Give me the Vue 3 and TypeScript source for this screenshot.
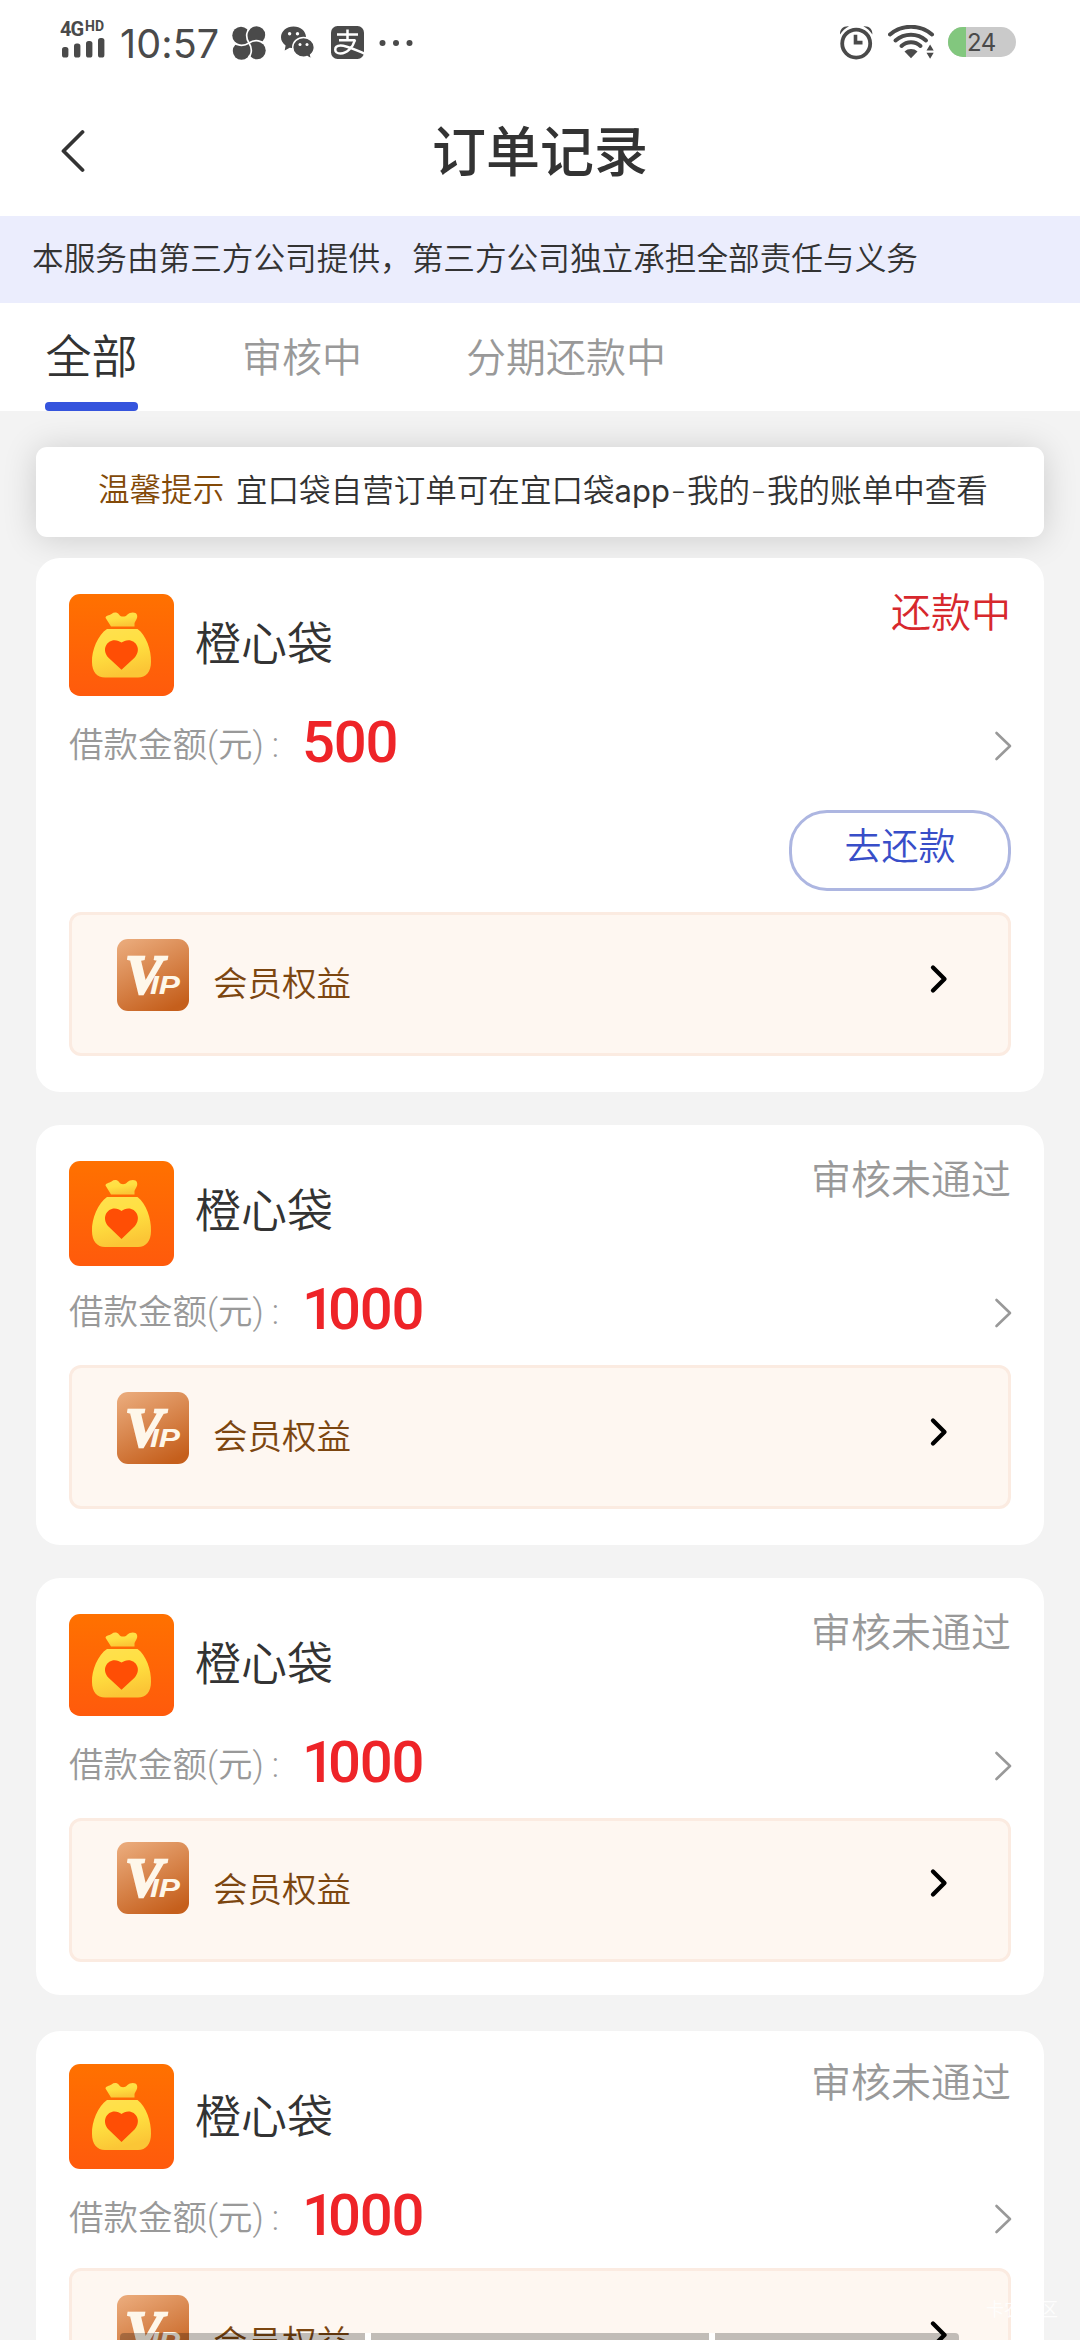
<script setup lang="ts">
interface Order {
  id: number
  name: string
  amount: number
  status: string
  repaying: boolean
}

const tabs: string[] = ['全部', '审核中', '分期还款中']
const activeTab = 0

const orders: Order[] = [
  { id: 1, name: '橙心袋', amount: 500, status: '还款中', repaying: true },
  { id: 2, name: '橙心袋', amount: 1000, status: '审核未通过', repaying: false },
  { id: 3, name: '橙心袋', amount: 1000, status: '审核未通过', repaying: false },
  { id: 4, name: '橙心袋', amount: 1000, status: '审核未通过', repaying: false },
]

// A leading "1" is narrower than the other digits and needs tighter kerning
const startsWithOne = (n: number): boolean => String(n).startsWith('1')
</script>

<template>
  <div class="screen">
    <div class="status-bar">
      <div class="signal">
        <div class="net"><span class="net-g">4G</span><span class="net-hd">HD</span></div>
        <svg class="bars" width="44" height="20" viewBox="0 0 44 20">
          <g fill="#4a4a4a">
            <rect x="0" y="9" width="6.4" height="10.5" rx="2.6" />
            <rect x="12" y="5.5" width="6.4" height="14" rx="2.6" />
            <rect x="24" y="3" width="6.4" height="16.5" rx="2.6" />
            <rect x="36" y="0" width="6.4" height="19.5" rx="2.6" />
          </g>
        </svg>
      </div>
      <span class="time">10:57</span>
      <svg class="app-ic fan" width="34" height="34" viewBox="0 0 34 34">
        <g fill="#4a4a4a">
          <circle cx="9" cy="9.5" r="8.7" />
          <circle cx="24.5" cy="9" r="8.7" />
          <circle cx="25" cy="24.5" r="8.7" />
          <circle cx="9.5" cy="25" r="8.7" />
          <rect x="9" y="9" width="16" height="16" />
        </g>
        <g fill="none" stroke="#fff" stroke-width="1.7">
          <path d="M17 17C13 11 14.500 4 19 0" />
          <path d="M17 17C23 13 30 14.500 34 19" />
          <path d="M17 17C21 23 19.500 30 15 34" />
          <path d="M17 17C11 21 4 19.500 0 15" />
        </g>
      </svg>
      <svg class="app-ic wechat" width="35" height="34" viewBox="0 0 35 34">
        <path d="M12.500 0.500C5.600.500 0 5.200 0 11.200c0 3.300 1.800 6.200 4.600 8.200L3.700 24.500l5-2.700c1.200.3 2.500.5 3.800.5 6.900 0 12.500-4.900 12.500-11.100S19.400.500 12.500.500z" fill="#4a4a4a" />
        <path d="M22.500 11.500c-6 0-10.800 4.400-10.800 9.800s4.800 9.800 10.800 9.800c1.300 0 2.500-.2 3.700-.6l4.300 2.500-.9-4.200c2.300-1.800 3.700-4.500 3.700-7.500 0-5.400-4.800-9.800-10.800-9.800z" fill="#4a4a4a" stroke="#fff" stroke-width="1.400" />
        <g fill="#fff">
          <circle cx="8.600" cy="7.800" r="1.700" /><circle cx="16.500" cy="7.800" r="1.700" />
          <circle cx="19" cy="18.500" r="1.500" /><circle cx="26" cy="18.500" r="1.500" />
        </g>
      </svg>
      <svg class="app-ic alipay" width="33" height="33" viewBox="0 0 33 33">
        <rect width="33" height="33" rx="6.500" fill="#4a4a4a" />
        <g fill="none" stroke="#fff" stroke-width="2.500">
          <path d="M6 8.500H27M16.500 3.500V14M8 14.300H24.500" />
          <path d="M24 14C22 21 16 27.500 9.500 27.500C2.500 27.500 2.500 19.800 9.500 19.600C15.500 19.500 23 23.500 33.500 27.500" />
        </g>
      </svg>
      <svg class="app-ic dots" width="34" height="8" viewBox="0 0 34 8">
        <g fill="#4a4a4a"><circle cx="3.500" cy="4" r="3" /><circle cx="17" cy="4" r="3" /><circle cx="30.500" cy="4" r="3" /></g>
      </svg>
      <div class="spacer"></div>
      <svg class="alarm" width="35" height="35" viewBox="0 0 35 35">
        <g fill="none" stroke="#4a4a4a">
          <circle cx="17.200" cy="18.600" r="14" stroke-width="3.800" />
          <path d="M16.500 9.800V17.600H23.500" stroke-width="3.600" />
        </g>
        <path d="M1 9.500C0.800 4 4 .8 10 1.200C6 3.300 3.500 6 1 9.500zM33.400 9.500C33.600 4 30.400.8 24.400 1.200C28.400 3.300 30.900 6 33.400 9.500z" fill="#4a4a4a" />
      </svg>
      <svg class="wifi" width="47" height="34" viewBox="0 0 47 34">
        <g fill="none" stroke="#4a4a4a" stroke-width="4" stroke-linecap="round">
          <path d="M2 9.500C14 -.8 32 -.8 44 9.500" />
          <path d="M7.500 15.500C16.500 7.800 29.500 7.800 38 15.500" />
          <path d="M13.500 21C19 16 27 16 32.500 21" />
        </g>
        <path d="M16.500 26.500C20 23.200 26 23.200 29.500 26.500L23 33.200z" fill="#4a4a4a" />
        <path d="M38.500 25.500l3.600-6 3.600 6zM38.500 27.700h7.200l-3.600 6z" fill="#4a4a4a" />
      </svg>
      <div class="battery"><div class="level"></div><span>24</span></div>
    </div>

    <header class="nav">
      <svg class="back" width="26" height="44" viewBox="0 0 26 44">
        <path d="M23.500 3L4.500 22L23.500 41" fill="none" stroke="#333" stroke-width="3.800" stroke-linecap="round" stroke-linejoin="round" />
      </svg>
      <h1>订单记录</h1>
    </header>

    <div class="notice">本服务由第三方公司提供，第三方公司独立承担全部责任与义务</div>

    <nav class="tabs">
      <div v-for="(t, i) in tabs" :key="t" class="tab" :class="{ active: i === activeTab }">{{ t }}</div>
    </nav>

    <div class="tip"><span class="tip-label">温馨提示</span><span class="tip-text">宜口袋自营订单可在宜口袋<span class="latin">app</span><span class="dash">-</span>我的<span class="dash">-</span>我的账单中查看</span></div>

    <main class="list">
      <section v-for="o in orders" :key="o.id" class="card">
        <div class="head">
          <svg class="logo" viewBox="0 0 105 105" preserveAspectRatio="none">
            <defs>
              <linearGradient :id="'bg' + o.id" x1="0" y1="0" x2="0" y2="1">
                <stop offset="0" stop-color="#ff7100" /><stop offset="1" stop-color="#ff5a0c" />
              </linearGradient>
              <linearGradient :id="'bag' + o.id" x1="0" y1="0" x2="0.300" y2="1">
                <stop offset="0" stop-color="#ffe050" /><stop offset="0.500" stop-color="#ffe040" /><stop offset="1" stop-color="#fbc636" />
              </linearGradient>
            </defs>
            <rect width="105" height="105" rx="11" :fill="`url(#bg${o.id})`" />
            <path d="M42 33.500L36.500 24.500C37 21.500 40 22.500 42.500 20.500C45 18.500 48 18.500 50 21C52 24 56 24 58.500 21C61 18.500 67 18 68 21.500C69 25 66.500 27 65.500 30V33.500z" :fill="`url(#bag${o.id})`" />
            <path d="M38 36H68.500C77 42 82.500 58 82 70C82 80 77 86 69 86H36C28 86 23 80 23 70C22.500 58 29 42 38 36z" :fill="`url(#bag${o.id})`" />
            <path d="M52.500 78L39.500 65.500C32 57 38 47.500 45.500 47.500C48.500 47.500 50.500 48.500 52.500 50C54.500 48.500 56.500 47.500 59.500 47.500C67 47.500 73 57 65.500 65.500z" fill="#ff4e05" />
          </svg>
          <span class="name">{{ o.name }}</span>
          <span class="state" :class="{ red: o.repaying }">{{ o.status }}</span>
        </div>
        <div class="amount">
          <span class="label">借款金额(元)<i>:</i></span>
          <span class="value" :class="{ 'lead-one': startsWithOne(o.amount) }">{{ o.amount }}</span>
          <svg class="more" width="18" height="30" viewBox="0 0 18 30">
            <path d="M2.500 2L16 15L2.500 28" fill="none" stroke="#999" stroke-width="2.600" stroke-linecap="round" stroke-linejoin="round" />
          </svg>
        </div>
        <div v-if="o.repaying" class="action"><button>去还款</button></div>
        <div class="vip">
          <svg class="vip-ic" width="72" height="72" viewBox="0 0 72 72">
            <defs>
              <linearGradient :id="'vip' + o.id" x1="0.200" y1="0" x2="0.700" y2="1">
                <stop offset="0" stop-color="#e9a878" /><stop offset="1" stop-color="#c55f1c" />
              </linearGradient>
            </defs>
            <rect width="72" height="72" rx="11" :fill="`url(#vip${o.id})`" />
            <text class="v" x="8" y="54" textLength="38" lengthAdjust="spacingAndGlyphs">V</text>
            <text class="ip" x="33" y="55" textLength="30" lengthAdjust="spacingAndGlyphs">IP</text>
          </svg>
          <span class="vip-text">会员权益</span>
          <svg class="vip-more" width="20" height="30" viewBox="0 0 20 30">
            <path d="M4 3.500L15.500 15L4 26.500" fill="none" stroke="#000" stroke-width="4.300" stroke-linecap="round" stroke-linejoin="round" />
          </svg>
        </div>
      </section>
    </main>

    <div class="watermark">卡农社区</div>
    <div class="gesture"><i></i><i></i><i></i></div>
  </div>
</template>

<style>
html,
body {
  margin: 0;
  overflow: hidden;
}
</style>

<style scoped>
.screen {
  position: relative;
  width: 1080px;
  height: 2340px;
  overflow: hidden;
  background: #f3f3f3;
  font-family: Roboto, "Noto Sans CJK SC", sans-serif;
  font-weight: 350;
  color: #333;
  display: flex;
  flex-direction: column;
}
.status-bar {
  height: 90px;
  flex: none;
  box-sizing: border-box;
  padding: 0 64px 0 60px;
  background: #fff;
  display: flex;
  align-items: flex-start;
  color: #4a4a4a;
}
.spacer { flex: 1; }
.signal { width: 60px; padding-top: 20px; }
.net { display: flex; height: 18px; line-height: 18px; font-weight: 700; }
.net-g { font-size: 20px; width: 25px; letter-spacing: -1px; }
.net-hd { font-size: 14px; line-height: 13px; }
.bars { display: block; margin: 0 0 0 2px; }
.time {
  width: 112px;
  font-family: Inter, sans-serif;
  font-size: 39.500px;
  line-height: 46px;
  margin-top: 21px;
  font-weight: 400;
  letter-spacing: 0.100px;
  white-space: nowrap;
}
.app-ic { flex: none; display: block; margin-top: 26px; }
.wechat { margin-left: 15px; }
.alipay { margin-left: 15px; }
.dots { margin: 39px 0 0 15px; }
.alarm { margin-top: 25px; }
.wifi { margin: 25px 0 0 14px; }
.battery {
  position: relative;
  width: 68px;
  height: 30px;
  margin: 27px 0 0 13px;
  border-radius: 15px;
  background: #cacaca;
  overflow: hidden;
  display: flex;
  font-family: Inter, sans-serif;
  font-size: 24px;
  line-height: 31px;
  font-weight: 400;
  letter-spacing: -0.500px;
}
.level { width: 18px; margin-right: 1px; background: #82c77e; }
.nav {
  height: 126px;
  flex: none;
  background: #fff;
  display: grid;
  grid-template-columns: 120px 1fr 120px;
}
.back { margin: 39px 0 0 59px; }
h1 {
  margin: 24px 0 0;
  font-size: 54px;
  line-height: 80px;
  font-weight: 500;
  text-align: center;
}
.notice {
  height: 87px;
  flex: none;
  box-sizing: border-box;
  padding-left: 32px;
  background: #ebedfd;
  font-size: 31.650px;
  line-height: 88px;
  white-space: nowrap;
}
.tabs {
  height: 108px;
  flex: none;
  background: #fff;
  display: flex;
  align-items: stretch;
  padding-left: 45px;
}
.tab {
  box-sizing: border-box;
  font-size: 40px;
  line-height: 60px;
  padding-top: 26px;
  color: #999;
  margin-right: 104px;
}
.tab.active {
  width: 93px;
  font-size: 46px;
  text-align: center;
  padding-top: 24px;
  color: #333;
  position: relative;
}
.tab.active::after {
  content: "";
  position: absolute;
  left: 0;
  right: 0;
  bottom: 0;
  height: 9px;
  border-radius: 4px;
  background: #3554dd;
}
.tip {
  flex: none;
  margin: 36px 36px 0;
  height: 90px;
  box-sizing: border-box;
  border-radius: 11px;
  background: #fff;
  box-shadow: 0 2px 34px rgba(0, 0, 0, 0.160);
  display: flex;
  padding-left: 62px;
  font-size: 31.560px;
  line-height: 87px;
  white-space: nowrap;
}
.tip-label { color: #834a08; width: 138px; }
.latin { font-family: Inter, sans-serif; font-size: 31px; font-weight: 400; }
.dash { display: inline-block; width: 17px; text-align: center; transform: scaleX(1.450); }
.list { margin-top: 21px; position: relative; }
.card {
  box-sizing: border-box;
  margin: 0 36px 33px;
  padding: 36px 33px;
  border-radius: 24px;
  background: #fff;
}
.head { display: flex; height: 105px; }
.logo { width: 105px; height: 105px; flex: none; }
.card:nth-child(odd) .logo { height: 102px; }
.name { flex: 1; margin-left: 21px; font-size: 46px; line-height: 101px; }
.state { font-size: 40px; line-height: 40px; color: #999; }
.state.red { color: #d7282d; }
.amount { display: flex; height: 99px; }
.label { width: 233px; font-size: 34.500px; line-height: 92px; color: #999; white-space: nowrap; }
.label i { font-style: normal; margin-left: 8px; }
.value {
  flex: 1;
  font-size: 58px;
  line-height: 87px;
  font-weight: 500;
  color: #ee2428;
  letter-spacing: -1.200px;
}
.value.lead-one::first-letter { letter-spacing: -7px; }
.more { margin: 32px -1px 0 0; }
.action { display: flex; justify-content: flex-end; height: 114px; }
button {
  box-sizing: border-box;
  width: 222px;
  height: 81px;
  margin-top: 12px;
  padding: 0 0 13px;
  border: 3px solid #adb6e1;
  border-radius: 38px;
  background: #fff;
  color: #384ec8;
  font-family: inherit;
  font-weight: 350;
  font-size: 37px;
}
.vip {
  box-sizing: border-box;
  height: 144px;
  border: 3px solid #fbebe1;
  border-radius: 12px;
  background: #fef7f1;
  display: flex;
}
.vip-ic { flex: none; margin: 24px 0 0 45px; }
.vip-ic text { fill: #fef7ea; font-weight: 700; font-style: italic; }
.vip-ic .v {
  font-family: "Liberation Serif", serif;
  font-size: 55px;
  stroke: #fef7ea;
  stroke-width: 2.400px;
}
.vip-ic .ip { font-size: 25px; font-family: "Liberation Sans", sans-serif; }
.vip-text { flex: 1; margin-left: 24px; font-size: 34.500px; line-height: 139px; color: #7c4610; }
.vip-more { margin: 49px 59px 0 0; }

.card:nth-child(3) { height: 417px; margin-bottom: 36px; }
.card:nth-child(3) .vip-ic { margin-top: 21px; }
.card:nth-child(3) .vip-more { margin-top: 47px; }
.card:nth-child(4) { padding-top: 33px; }
.card:nth-child(4) .name { line-height: 106px; }
.card:nth-child(4) .label { line-height: 98px; }
.card:nth-child(4) .value { line-height: 93px; }
.card:nth-child(4) .more { margin-top: 35px; }
.card:nth-child(4) .vip-text { line-height: 145px; }

.watermark {
  position: absolute;
  right: 22px;
  bottom: 17px;
  font-size: 18px;
  line-height: 26px;
  color: rgba(255, 255, 255, 0.850);
}
.gesture {
  position: absolute;
  left: 120px;
  bottom: 0;
  width: 839px;
  height: 7px;
  display: grid;
  grid-template-columns: 245px 338px 244px;
  gap: 6px;
  background: linear-gradient(90deg, transparent 245px, #fff 245px, #fff 251px, transparent 251px, transparent 589px, #fff 589px, #fff 595px, transparent 595px);
}
.gesture i { background: rgba(0, 0, 0, 0.240); }
.gesture i:first-child { border-top-left-radius: 4px; }
.gesture i:last-child { border-top-right-radius: 4px; }
</style>
